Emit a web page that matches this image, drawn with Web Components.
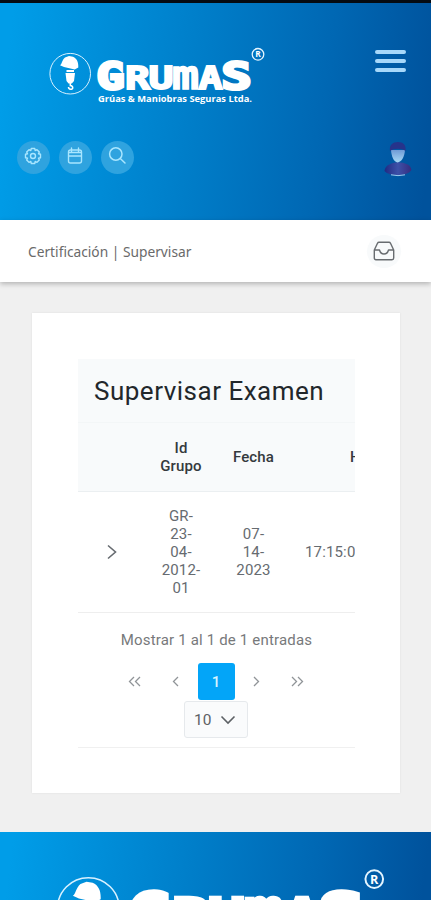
<!DOCTYPE html>
<html lang="es">
<head>
<meta charset="utf-8">
<title>Supervisar Examen</title>
<style>
html,body{margin:0;height:900px;overflow:hidden;background:#f0f0f0}
body{font-family:Roboto,"Liberation Sans",sans-serif;color:#666b70}
</style>
</head>
<body>
<supervise-page></supervise-page>
<script>
const define=(name,html)=>customElements.define(name,class extends HTMLElement{
  constructor(){super();this.attachShadow({mode:'open'}).innerHTML=html;}
});

define('grumas-logo',`
<style>:host{display:block}svg{display:block;width:100%;height:100%;overflow:visible}
text{font-weight:700;fill:#fff}
.w{font-family:"DejaVu Sans Mono","DejaVu Sans",monospace;stroke:#fff;stroke-linejoin:miter}.s{font-family:"Open Sans","Noto Sans",sans-serif}</style>
<svg viewBox="49 47 216 58">
<circle cx="70.2" cy="73.7" r="20.3" fill="none" stroke="#d8f1ff" stroke-width="1"/>
<path fill="#fff" d="M60 65.300C62 64 62 60 65 57.500L69 56L73 56.700C77 58.500 78.500 62 78.300 67.500L74.700 69.500L64 67Z"/>
<path fill="#fff" d="M66.500 70H74V72H66.500ZM65.500 73H75L74 81L71.800 83.500H68.500L66.500 81Z"/>
<path d="M70.300 83V85.500C73.500 86 73.500 89.500 70.500 89.300Q68.500 89 68.500 87" fill="none" stroke="#fff" stroke-width="1.500"/>
<text class="w" x="96.500" y="89" font-size="36.500" stroke-width="3" textLength="28" lengthAdjust="spacingAndGlyphs">G</text>
<text class="w" x="125" y="89.300" font-size="31.500" stroke-width="1.800" textLength="25" lengthAdjust="spacingAndGlyphs">R</text>
<text class="w" x="148.500" y="89.300" font-size="31.500" stroke-width="1.800" textLength="25" lengthAdjust="spacingAndGlyphs">U</text>
<text class="w" x="172" y="89.300" font-size="41" stroke-width="1.500" textLength="27" lengthAdjust="spacingAndGlyphs">m</text>
<text class="w" x="198.500" y="89.300" font-size="31.500" stroke-width="1.800" textLength="24" lengthAdjust="spacingAndGlyphs">A</text>
<text class="w" x="221.500" y="89" font-size="36.500" stroke-width="3" textLength="30" lengthAdjust="spacingAndGlyphs">S</text>
<text class="s" x="98" y="101.500" font-size="9" textLength="154" lengthAdjust="spacingAndGlyphs">Grúas &amp; Maniobras Seguras Ltda.</text>
<circle cx="258" cy="54.300" r="5.800" fill="none" stroke="#e4f5ff" stroke-width="1.300"/>
<text class="s" x="258" y="57.300" font-size="8.300" text-anchor="middle">R</text>
</svg>`);

define('round-button',`
<style>:host{display:grid;place-items:center;width:33px;height:33px;border-radius:50%;background:var(--disc,#2fa3df);color:#a9e6ff}
::slotted(svg){display:block}</style><slot></slot>`);

define('top-bar',`
<style>:host{display:flex;flex-direction:column;box-sizing:border-box;height:220px;border-top:3px solid #050b12;padding:44px 16px 0 16px;background:linear-gradient(97deg,#009de8 3%,#0080cb 42%,#0067b3 74%,#00529c 98%)}
.r{display:flex;justify-content:space-between}.brand{height:93.500px;padding-left:33px;padding-right:9px;box-sizing:border-box}
grumas-logo{width:216px;height:58px}.menu{display:grid;align-content:start;gap:5.500px;width:31px;padding-top:3px}
.menu i{display:block;height:3.500px;width:31px;border-radius:2px;background:#a7d8fa}
.tools{display:flex;gap:9px;padding-left:1px}.tools round-button svg{margin:-2px 0 0 -1px}</style>
<div class="r brand"><grumas-logo></grumas-logo><div class="menu"><i></i><i></i><i></i></div></div>
<div class="r"><div class="tools">
<round-button><svg width="18" height="18" viewBox="0 0 18 18" fill="none" stroke="currentColor" stroke-width="1.400" stroke-linejoin="round"><path d="M7.300 1.500H10.700L11.200 3.500L13 2.700L15.300 5L14.500 6.800L16.500 7.300V10.700L14.500 11.200L15.300 13L13 15.300L11.200 14.500L10.700 16.500H7.300L6.800 14.500L5 15.300L2.700 13L3.500 11.200L1.500 10.700V7.300L3.500 6.800L2.700 5L5 2.700L6.800 3.500Z"/><circle cx="9" cy="9" r="2.500"/></svg></round-button>
<round-button><svg width="18" height="18" viewBox="0 0 18 18" fill="none" stroke="currentColor" stroke-width="1.400" stroke-linecap="round"><rect x="2.500" y="3" width="13" height="13" rx="2"/><path d="M5.500 1V4.500M12.500 1V4.500M3 5.500H15M3 9H15"/></svg></round-button>
<round-button><svg width="20" height="20" viewBox="0 0 20 20" fill="none" stroke="currentColor" stroke-width="1.500" stroke-linecap="round"><circle cx="8.800" cy="8" r="6.200"/><path d="M13.300 12.500L18 17"/></svg></round-button>
</div>
<svg width="34" height="36" viewBox="0 0 34 36"><defs><linearGradient id="f" x2="0" y2="1"><stop stop-color="#6f9bd6"/><stop offset="1" stop-color="#a7d8f5"/></linearGradient><linearGradient id="b" x2="1"><stop stop-color="#202a83"/><stop offset=".5" stop-color="#3d51a8"/><stop offset="1" stop-color="#352c7e"/></linearGradient></defs>
<path d="M3.500 30C4 24 10 22 17 21C24 22 29.500 23 30.500 29C28 33 22 34 17 34C11 34 6 33 3.500 30Z" fill="url(#b)"/><path d="M10 9C10.500 16 13 21 16.500 21.500C20.500 21 23.500 16 24 9Z" fill="url(#f)"/><path d="M9 10C8 4 12 1 17 1C22 1 25.500 4 24.500 10C21 7 13 7 9 10Z" fill="#26348b"/><path d="M10 33.800Q17 35.500 24 33.800" stroke="#9fcbef" fill="none"/></svg>
</div>`);

define('crumb-bar',`
<style>:host{display:flex;align-items:center;justify-content:space-between;box-sizing:border-box;height:62px;padding:0 30px 0 28px;background:#fff;box-shadow:0 2px 5px rgba(0,0,0,.25);position:relative;font:13.750px "Noto Sans",sans-serif;color:#6a6a6a}
span{padding-top:1px}round-button{--disc:#f8fafb;width:34px}</style>
<span><slot></slot></span><round-button><svg width="22" height="20" viewBox="0 0 22 20" fill="none" stroke="#686c70" stroke-width="1.400" stroke-linejoin="round"><path d="M1.300 9L4.500 2.200Q5 1.200 6 1.200H16Q17 1.200 17.500 2.200L20.700 9V17Q20.700 18.700 19 18.700H3Q1.300 18.700 1.300 17ZM1.300 9H6.500Q7.500 13 11 13T15.500 9H20.700"/></svg></round-button>`);

define('exam-table',`
<style>:host{display:block;width:277px;height:388px;overflow:hidden;border-bottom:1px solid #f0f0f0}
h1{margin:0;height:64px;box-sizing:border-box;padding-left:16px;font-size:26px;font-weight:400;line-height:65px;letter-spacing:.5px;color:#22272b;background:#f8fafb;border-bottom:1px solid #f3f6f7}
.g{display:grid;grid-template-columns:67px 72px 73px 140px;align-items:center;justify-items:center;text-align:center;font-size:15px;line-height:18px;letter-spacing:.15px;white-space:nowrap}
.h{height:69px;box-sizing:border-box;background:#f8fafb;border-bottom:1px solid #ebeff1;color:#34393d;font-weight:500}
.d{height:121px;box-sizing:border-box;border-bottom:1px solid #eee}
.l{justify-self:start;padding-left:15px}.hl{justify-self:start;padding-left:60px}
.m{text-align:center;font-size:15px;line-height:18px;padding-top:18px;letter-spacing:.17px;color:#77797b}
.p{display:flex;justify-content:center;align-items:center;height:37px;margin-top:14px;color:#909498;padding-right:1px}
.p>*{width:37px;margin:0 1.800px;height:37px;display:grid;place-items:center}
.p b{background:#03a5f8;color:#d8f3ff;border-radius:3px;font-size:15px;font-weight:500}
.s{display:flex;align-items:center;justify-content:space-between;box-sizing:border-box;width:64px;height:37px;margin:1px auto 0 106px;padding:0 11px 0 9px;border:1px solid #e6e9ec;border-radius:3px;background:#fafbfc;font-size:15.500px;color:#5d6165}
svg{display:block;fill:none;stroke:currentColor;stroke-width:1.300}
</style>
<h1>Supervisar Examen</h1>
<div class="g h"><i></i><span>Id<br>Grupo</span><span>Fecha</span><span class="hl">Hora</span></div>
<div class="g d"><svg width="10" height="16" viewBox="0 0 10 16" style="stroke-width:1.600"><path d="M1 1.500L8.500 8L1 14.500"/></svg><span>GR-<br>23-<br>04-<br>2012-<br>01</span><span>07-<br>14-<br>2023</span><span class="l">17:15:00</span></div>
<div class="m">Mostrar 1 al 1 de 1 entradas</div>
<div class="p"><span><svg width="13" height="11" viewBox="0 0 13 11"><path d="M6 1L1.500 5.500L6 10M12 1L7.500 5.500L12 10"/></svg></span><span><svg width="7" height="11" viewBox="0 0 7 11"><path d="M6 1L1.500 5.500L6 10"/></svg></span><b>1</b><span><svg width="7" height="11" viewBox="0 0 7 11"><path d="M1 1L5.500 5.500L1 10"/></svg></span><span><svg width="13" height="11" viewBox="0 0 13 11"><path d="M1 1L5.500 5.500L1 10M7 1L11.500 5.500L7 10"/></svg></span></div>
<div class="s">10<svg width="16" height="10" viewBox="0 0 16 10" style="stroke-width:1.600"><path d="M1.500 1.500L8 8L14.500 1.500"/></svg></div>`);

define('content-card',`
<style>:host{display:block;box-sizing:border-box;width:368px;height:480px;margin:31px auto 39px 32px;padding:46px 45px 0 46px;background:#fff;box-shadow:0 0 2px rgba(0,0,0,.08)}</style><slot></slot>`);

define('page-footer',`
<style>:host{display:block;box-sizing:border-box;height:68px;overflow:hidden;padding:36px 0 0 56px;background:linear-gradient(97deg,#009de8 3%,#0080cb 42%,#0067b3 74%,#00529c 98%)}
grumas-logo{width:329px;height:88.300px}</style><grumas-logo></grumas-logo>`);

define('supervise-page',`
<style>:host{display:flex;flex-direction:column;width:431px;height:900px;overflow:hidden}:host>*{flex:none}</style>
<top-bar></top-bar><crumb-bar>Certificación | Supervisar</crumb-bar><content-card><exam-table></exam-table></content-card><page-footer></page-footer>`);
</script>
</body>
</html>
